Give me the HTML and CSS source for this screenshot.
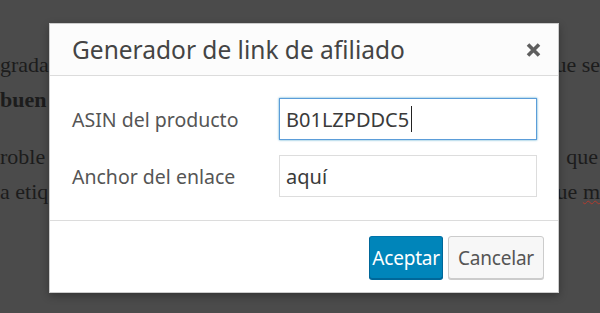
FILE: index.html
```html
<!DOCTYPE html>
<html lang="es">
<head>
  <meta charset="UTF-8">
  <title>Generador de link de afiliado</title>
  <link rel="stylesheet" href="styles.css">
</head>
<body>
  <div class="article">
    <p>
      <span class="line"><span>grada</span><span>ue se</span></span>
      <span class="line"><strong>buen</strong><span></span></span>
    </p>
    <p>
      <span class="line"><span>roble</span><span class="indent">que</span></span>
      <span class="line"><span>a etiq</span><span>ue <span class="typo">m</span></span></span>
    </p>
  </div>

  <div class="modal">
    <div class="modal-head">
      <h2>Generador de link de afiliado</h2>
      <button class="close" aria-label="Cerrar">
        <svg width="17" height="16" viewBox="0 0 17 16"><path d="M3 2.5 L14 13.5 M14 2.5 L3 13.5" stroke="#5f5f5f" stroke-width="3.6"/></svg>
      </button>
    </div>
    <div class="modal-body">
      <div class="field">
        <label for="asin">ASIN del producto</label>
        <div class="input focus" id="asin">B01LZPDDC5<span class="caret"></span></div>
      </div>
      <div class="field">
        <label for="anchor">Anchor del enlace</label>
        <div class="input" id="anchor">aquí</div>
      </div>
    </div>
    <div class="modal-foot">
      <button class="btn primary">Aceptar</button>
      <button class="btn">Cancelar</button>
    </div>
  </div>
</body>
</html>
```

FILE: styles.css
```css
* {
  box-sizing: border-box;
  margin: 0;
  padding: 0;
}

body {
  background: #4b4b4b;
  color: #1c1c1c;
  font-family: 'Liberation Serif', serif;
  overflow: hidden;
  height: 313px;
}

.article {
  padding-top: 47px;
  font-size: 22px;
  line-height: 35px;
}

.article p {
  margin-bottom: 22px;
}

.line {
  display: flex;
  justify-content: space-between;
  white-space: nowrap;
}

.indent {
  padding-right: 2px;
}

.typo {
  text-decoration: underline wavy #b03a2e;
  text-decoration-thickness: 1px;
}

/* dialog */
.modal {
  position: absolute;
  left: 49px;
  top: 23px;
  width: 510px;
  height: 270px;
  background: #fff;
  border: 1px solid #ccc;
  box-shadow: 0 3px 8px rgba(0, 0, 0, 0.3);
  display: flex;
  flex-direction: column;
  font-family: 'Noto Sans', sans-serif;
}

.modal-head {
  height: 52px;
  background: #fcfcfc;
  border-bottom: 1px solid #dcdcdc;
  display: flex;
  align-items: center;
  justify-content: space-between;
  padding: 0 16px 0 22px;
}

.modal-head h2 {
  font-size: 24.5px;
  font-weight: 400;
  color: #444;
}

.close {
  background: none;
  border: none;
  width: 17px;
  height: 16px;
  display: flex;
}

.modal-body {
  flex: 1;
  padding: 22px 21px 0 22px;
  display: flex;
  flex-direction: column;
  gap: 15px;
}

.field {
  display: flex;
  align-items: center;
}

.field label {
  width: 207px;
  font-size: 19.5px;
  color: #555;
}

.input {
  width: 258px;
  height: 42px;
  border: 1px solid #ddd;
  padding: 0 6px;
  font-size: 20px;
  color: #3a3a3a;
  display: flex;
  align-items: center;
}

.input.focus {
  border-color: #5b9dd9;
  box-shadow: 0 0 2px rgba(30, 140, 190, 0.8);
}

.caret {
  width: 1px;
  height: 26px;
  background: #222;
  margin-left: 2px;
}

.modal-foot {
  height: 72px;
  border-top: 1px solid #dcdcdc;
  display: flex;
  justify-content: flex-end;
  align-items: flex-start;
  gap: 5px;
  padding: 15px 14px 0 0;
}

.btn {
  height: 43px;
  font-family: 'Noto Sans', sans-serif;
  font-size: 19px;
  border-radius: 3px;
  border: 1px solid #ccc;
  background: #f7f7f7;
  color: #555;
  padding: 0 9px;
  box-shadow: 0 1px 0 #ccc;
  letter-spacing: -0.2px;
}

.btn.primary {
  background: #0085ba;
  border-color: #0073aa #006799 #006799;
  color: #fff;
  padding: 0 2px;
  box-shadow: 0 1px 0 #006799;
}
```
